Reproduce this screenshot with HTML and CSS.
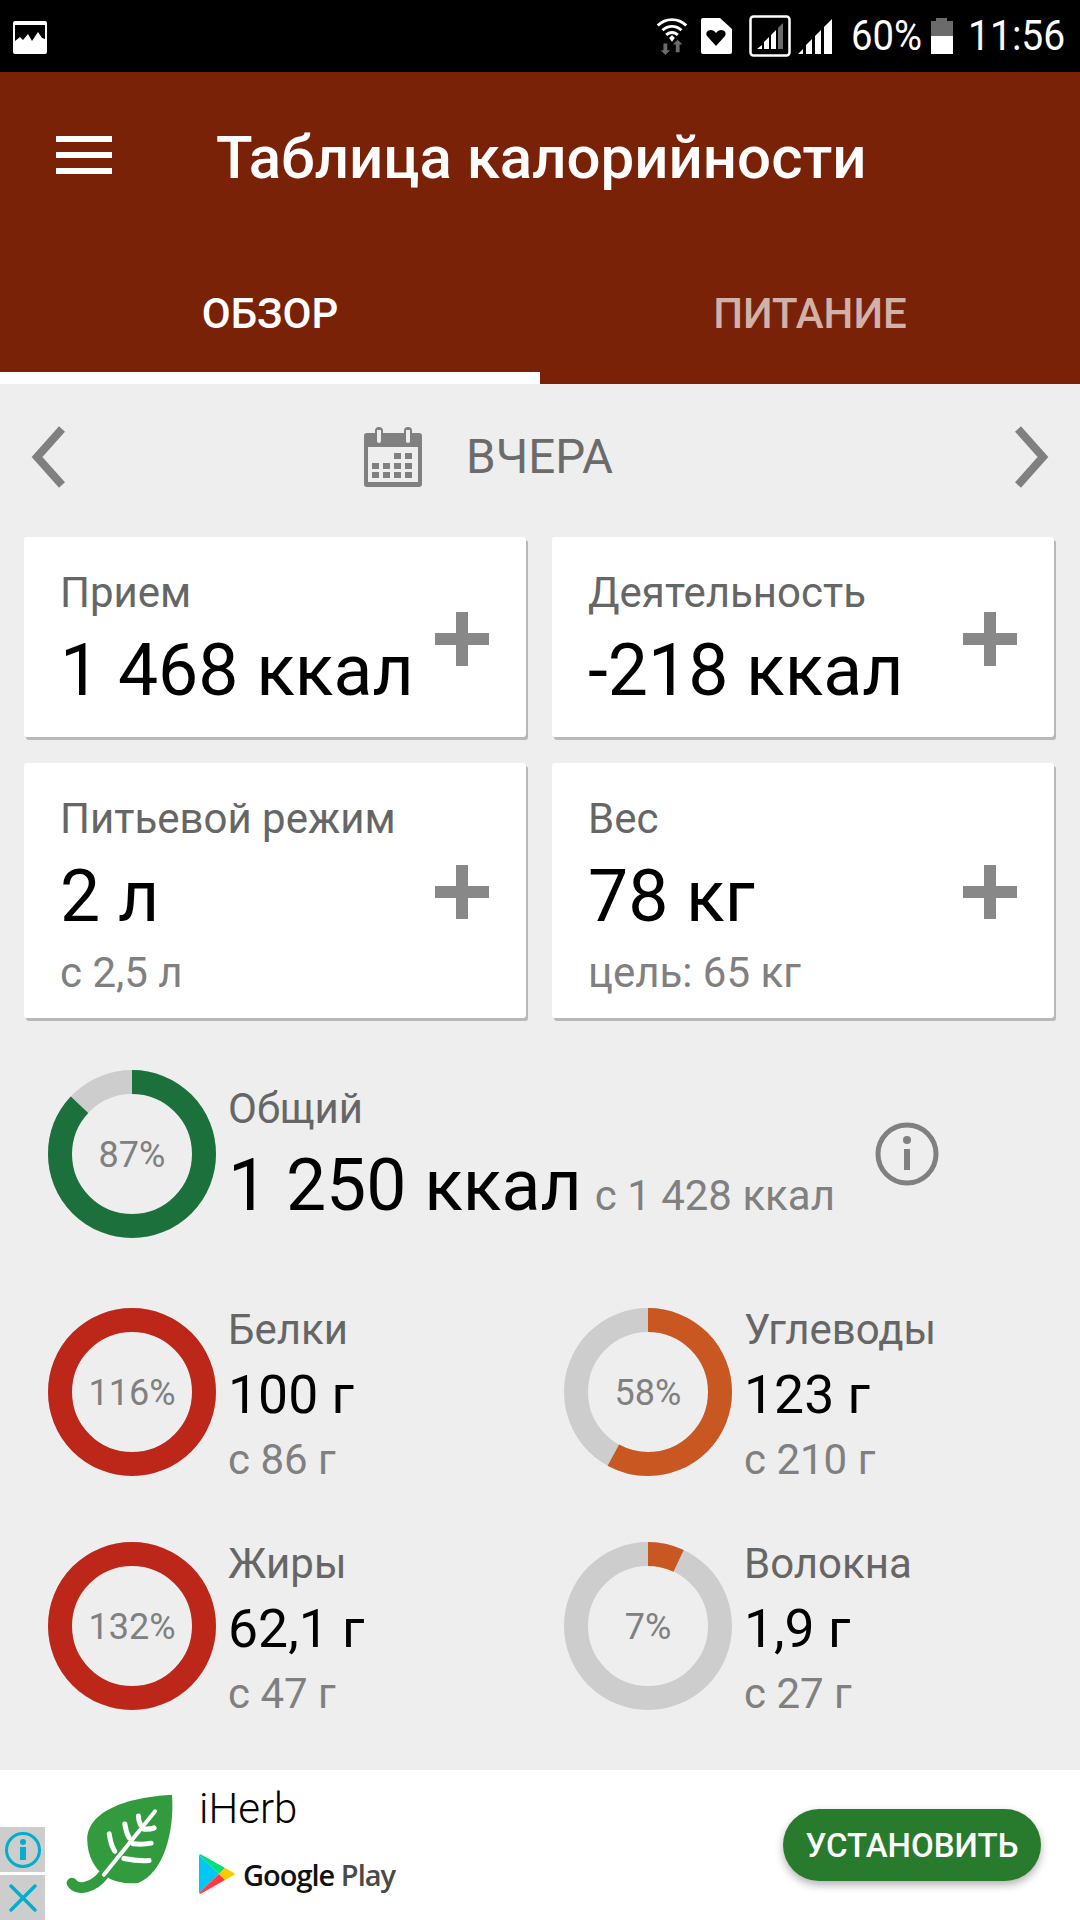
FILE: index.html
```html
<!DOCTYPE html>
<html lang="ru">
<head>
    <meta charset="UTF-8">
    <meta name="viewport" content="width=device-width, initial-scale=1.0">
    <title>Таблица калорийности</title>
    <link rel="stylesheet" href="styles.css">
</head>
<body>
    <div class="status-bar">
        <svg class="status-pic" width="36" height="36" viewBox="0 0 36 36">
            <path fill="#fff" d="M3 2h30a2 2 0 0 1 2 2v29a2 2 0 0 1-2 2H3a2 2 0 0 1-2-2V4a2 2 0 0 1 2-2z"/>
            <path fill="#000" d="M3 6h30v14l-3-1-4-6-6 9-4-7-5 6-3-3-5 4z"/>
        </svg>
        <div class="status-right">
            <svg class="wifi" width="34" height="38" viewBox="0 0 34 40">
                <path fill="none" stroke="#fff" stroke-width="3" d="M2 9a21 21 0 0 1 30 0M7 14a14 14 0 0 1 20 0M11 19a8 8 0 0 1 12 0"/>
                <path fill="#fff" d="M14 22l3-3 3 3-3 4z"/>
                <path fill="#6b6b6b" d="M8 28h4v7h3l-5 5-5-5h3zM23 24l5 5h-3v8h-4v-8h-3z"/>
            </svg>
            <svg class="sim" width="32" height="36" viewBox="0 0 32 36">
                <path fill="#fff" d="M3 0h17l12 11v23a2 2 0 0 1-2 2H3a2 2 0 0 1-2-2V2a2 2 0 0 1 2-2z"/>
                <path fill="#000" d="M16 28l-9-10c-3-5 5-9 9-3 4-6 12-2 9 3z"/>
            </svg>
            <svg class="sim-box" width="42" height="42" viewBox="0 0 42 42">
                <rect x="1.500" y="1.500" width="39" height="39" rx="3" fill="none" stroke="#fff" stroke-width="2.500"/>
                <path fill="#fff" d="M8 34l5-4v4zM15 34v-7l5-5v12zM22 34V20l5-5v19z"/>
                <path fill="#6b6b6b" d="M29 34V13l5-5v26z"/>
            </svg>
            <svg width="36" height="36" viewBox="0 0 36 36">
                <path fill="#fff" d="M0 36l5-5v5zM8 36V27l6-6v15zM17 36V18l6-6v24zM26 36V9l8-8v35z"/>
            </svg>
            <span class="status-text percent">60%</span>
            <svg class="battery" width="24" height="36" viewBox="0 0 24 36">
                <path fill="#6b6b6b" d="M6 0h11v3h6v15H1V3h5z"/>
                <rect x="1" y="18" width="22" height="18" fill="#fff"/>
            </svg>
            <span class="status-text time">11:56</span>
        </div>
    </div>

    <header class="app-bar">
        <div class="toolbar">
            <div class="menu-icon"><span></span><span></span><span></span></div>
            <h1>Таблица калорийности</h1>
        </div>
        <div class="tabs">
            <div class="tab active">ОБЗОР</div>
            <div class="tab">ПИТАНИЕ</div>
        </div>
    </header>

    <main class="content">
        <div class="date-row">
            <svg width="38" height="64" viewBox="0 0 38 64"><path fill="none" stroke="#808080" stroke-width="8" d="M32 4L7 32l25 28"/></svg>
            <div class="date">
                <svg width="60" height="60" viewBox="0 0 60 60">
                    <path fill="#808080" d="M4 6h8V3a4 4 0 0 1 4-3 4 4 0 0 1 4 3v3h21V3a4 4 0 0 1 4-3 4 4 0 0 1 4 3v3h7a3 3 0 0 1 3 3v48a3 3 0 0 1-3 3H4a3 3 0 0 1-3-3V9a3 3 0 0 1 3-3z"/>
                    <path fill="#eee" d="M5 20h50v35H5zM14 3h4v11a2 2 0 0 1-4 0zM43 3h4v11a2 2 0 0 1-4 0z"/>
                    <path fill="#808080" d="M31 26h7v6h-7zM42 26h7v6h-7zM9 36h7v6H9zM20 36h7v6h-7zM31 36h7v6h-7zM42 36h7v6h-7zM9 45h7v6H9zM20 45h7v6h-7zM31 45h7v6h-7zM42 45h7v6h-7z"/>
                </svg>
                <span>ВЧЕРА</span>
            </div>
            <svg width="38" height="64" viewBox="0 0 38 64"><path fill="none" stroke="#808080" stroke-width="8" d="M6 4l25 28L6 60"/></svg>
        </div>

        <div class="cards">
            <div class="card short">
                <div class="card-text">
                    <div class="label">Прием</div>
                    <div class="value">1 468 ккал</div>
                </div>
                <div class="plus"></div>
            </div>
            <div class="card short">
                <div class="card-text">
                    <div class="label">Деятельность</div>
                    <div class="value">-218 ккал</div>
                </div>
                <div class="plus"></div>
            </div>
            <div class="card">
                <div class="card-text">
                    <div class="label">Питьевой режим</div>
                    <div class="value">2 л</div>
                    <div class="sub">с 2,5 л</div>
                </div>
                <div class="plus"></div>
            </div>
            <div class="card">
                <div class="card-text">
                    <div class="label">Вес</div>
                    <div class="value">78 кг</div>
                    <div class="sub">цель: 65 кг</div>
                </div>
                <div class="plus"></div>
            </div>
        </div>

        <div class="total">
            <div class="ring">
                <svg width="168" height="168" viewBox="0 0 168 168">
                    <circle class="track" cx="84" cy="84" r="72"/>
                    <circle class="arc" stroke="#1b703c" stroke-dasharray="87 100" pathLength="100" cx="84" cy="84" r="72"/>
                </svg>
                <span>87%</span>
            </div>
            <div class="total-text">
                <div class="label">Общий</div>
                <div class="total-line"><span class="value">1 250 ккал</span><span class="sub">с 1 428 ккал</span></div>
            </div>
            <svg class="info" width="64" height="64" viewBox="0 0 64 64">
                <circle cx="32" cy="32" r="29" fill="none" stroke="#808080" stroke-width="5"/>
                <rect x="29" y="27" width="6" height="21" fill="#808080"/>
                <circle cx="32" cy="18" r="4" fill="#808080"/>
            </svg>
        </div>

        <div class="nutrients">
            <div class="nutrient">
                <div class="ring">
                    <svg width="168" height="168" viewBox="0 0 168 168">
                        <circle class="track" cx="84" cy="84" r="72"/>
                        <circle class="arc" stroke="#bd2719" stroke-dasharray="100 100" pathLength="100" cx="84" cy="84" r="72"/>
                    </svg>
                    <span>116%</span>
                </div>
                <div class="nutrient-text">
                    <div class="label">Белки</div>
                    <div class="amount">100 г</div>
                    <div class="sub">с 86 г</div>
                </div>
            </div>
            <div class="nutrient">
                <div class="ring">
                    <svg width="168" height="168" viewBox="0 0 168 168">
                        <circle class="track" cx="84" cy="84" r="72"/>
                        <circle class="arc" stroke="#c85722" stroke-dasharray="58 100" pathLength="100" cx="84" cy="84" r="72"/>
                    </svg>
                    <span>58%</span>
                </div>
                <div class="nutrient-text">
                    <div class="label">Углеводы</div>
                    <div class="amount">123 г</div>
                    <div class="sub">с 210 г</div>
                </div>
            </div>
            <div class="nutrient">
                <div class="ring">
                    <svg width="168" height="168" viewBox="0 0 168 168">
                        <circle class="track" cx="84" cy="84" r="72"/>
                        <circle class="arc" stroke="#bd2719" stroke-dasharray="100 100" pathLength="100" cx="84" cy="84" r="72"/>
                    </svg>
                    <span>132%</span>
                </div>
                <div class="nutrient-text">
                    <div class="label">Жиры</div>
                    <div class="amount">62,1 г</div>
                    <div class="sub">с 47 г</div>
                </div>
            </div>
            <div class="nutrient">
                <div class="ring">
                    <svg width="168" height="168" viewBox="0 0 168 168">
                        <circle class="track" cx="84" cy="84" r="72"/>
                        <circle class="arc" stroke="#c85722" stroke-dasharray="7 100" pathLength="100" cx="84" cy="84" r="72"/>
                    </svg>
                    <span>7%</span>
                </div>
                <div class="nutrient-text">
                    <div class="label">Волокна</div>
                    <div class="amount">1,9 г</div>
                    <div class="sub">с 27 г</div>
                </div>
            </div>
        </div>
    </main>

    <footer class="ad">
        <svg class="ad-logo" width="113" height="107" viewBox="195 100 340 320">
            <path fill="#319b3d" d="M517 105C420 108 262 140 262 240c0 50 25 90 50 105 30 25 70 27 103 25C490 340 525 220 517 105z"/>
            <path fill="none" stroke="#319b3d" stroke-width="32" stroke-linecap="round" d="M216 370c15 25 65 15 95-25"/>
            <g fill="none" stroke="#fff" stroke-linecap="round">
                <path stroke-width="12" d="M312 345L466 154"/>
                <path stroke-width="15" d="M328 222c3 20 8 40 17 52M375 192c2 15 5 28 13 42M416 168c0 10 2 18 6 26M372 296c25 5 50 8 76 6M400 252c20 2 35 2 54-2M432 208c10 0 22 0 31-4"/>
            </g>
        </svg>
        <div class="ad-text">
            <div class="ad-name">iHerb</div>
            <div class="store">
                <svg width="36" height="40" viewBox="0 0 36 40">
                    <path fill="#00c8f5" d="M0 1l20 19L0 39z"/>
                    <path fill="#00e07a" d="M0 1c1-1 2-1 3 0l23 13-6 6z"/>
                    <path fill="#ffc900" d="M26 14l9 5c1 .6 1 1.400 0 2l-9 5-6-6z"/>
                    <path fill="#ff3a44" d="M0 39c1 1 2 1 3 0l23-13-6-6z"/>
                </svg>
                <span class="store-name">Google <b>Play</b></span>
            </div>
        </div>
        <div class="install">УСТАНОВИТЬ</div>
        <div class="ad-choices">
            <div class="choice">
                <svg width="38" height="38" viewBox="0 0 38 38">
                    <circle cx="19" cy="19" r="16.500" fill="none" stroke="#00aecd" stroke-width="3"/>
                    <rect x="16" y="16" width="6" height="13" fill="#00aecd"/>
                    <circle cx="19" cy="11" r="3" fill="#00aecd"/>
                </svg>
            </div>
            <div class="choice">
                <svg width="30" height="30" viewBox="0 0 30 30">
                    <path fill="none" stroke="#00aecd" stroke-width="3.500" stroke-linecap="round" d="M3 3l24 24M27 3L3 27"/>
                </svg>
            </div>
        </div>
    </footer>
</body>
</html>
```

FILE: styles.css
```css
* { box-sizing: border-box; }
html, body { margin: 0; padding: 0; }
body {
    width: 1080px;
    height: 1920px;
    overflow: hidden;
    display: flex;
    flex-direction: column;
    font-family: Roboto, "Noto Sans", sans-serif;
    background-color: #eee;
}

/* status bar */
.status-bar {
    height: 72px;
    background-color: #000;
    display: flex;
    align-items: center;
    justify-content: space-between;
    padding: 0 17px 0 12px;
    color: #fff;
}
.status-pic { margin-top: 1px; }
.status-right { display: flex; align-items: center; gap: 7px; }
.sim { margin-left: 4px; }
.sim-box { margin-left: 10px; }
.status-text {
    display: block;
    font-size: 42px;
    line-height: 72px;
    white-space: nowrap;
    transform: scaleX(0.91);
    transform-origin: left center;
}
.percent { width: 69px; margin-left: 10px; }
.battery { margin-left: 3px; }
.time { width: 95px; margin-left: 7px; transform: scaleX(0.93); }

/* app bar */
.app-bar { height: 312px; background-color: #7a2208; display: flex; flex-direction: column; }
.toolbar { height: 168px; display: flex; align-items: center; padding: 0 0 0 56px; }
.menu-icon { width: 56px; display: flex; flex-direction: column; gap: 10px; margin: -2px 104px 0 0; }
.menu-icon span { height: 6px; background-color: #fff; }
h1 { margin: 2px 0 0; font-size: 60px; font-weight: 500; color: #fff; }
.tabs { flex: 1; display: flex; }
.tab {
    width: 540px;
    display: flex;
    align-items: center;
    justify-content: center;
    padding: 14px 0 12px;
    font-size: 42px;
    font-weight: 500;
    color: #d1b1a8;
}
.tab.active { color: #fff; border-bottom: 12px solid #fff; padding-bottom: 0; }

/* date row */
.date-row {
    height: 153px;
    display: flex;
    align-items: center;
    justify-content: space-between;
    padding: 0 30px 8px;
}
.date { display: flex; align-items: center; gap: 43px; font-size: 47.500px; color: #6b6b6b; margin-right: 104px; }

/* cards */
.cards {
    display: grid;
    grid-template-columns: 502px 502px;
    grid-template-rows: 200px 255px;
    gap: 26px;
    padding: 0 26px 0 24px;
}
.card {
    background-color: #fff;
    border-radius: 3px;
    box-shadow: 2px 3px 0 #b8b8b8;
    padding: 33px 36px;
    display: flex;
    justify-content: space-between;
}
.label { font-size: 42px; line-height: 46px; color: #666; }
.value { font-size: 71.500px; line-height: 84px; color: #000; }
.sub { font-size: 42px; line-height: 46px; color: #808080; }
.card .value { margin-top: 13px; }
.card .sub { margin-top: 11px; }
.plus {
    width: 54px;
    height: 54px;
    margin-right: 1px;
    align-self: center;
    background:
        linear-gradient(#888, #888) center / 100% 12px no-repeat,
        linear-gradient(#888, #888) center / 12px 100% no-repeat;
}
.card.short .plus { margin-top: 4px; }
.card:not(.short) .plus { margin-top: 2px; }

/* rings */
.ring { position: relative; width: 168px; height: 168px; flex-shrink: 0; }
.ring svg { display: block; transform: rotate(-90deg); }
.ring span {
    position: absolute;
    inset: 0;
    padding-top: 2px;
    display: flex;
    align-items: center;
    justify-content: center;
    font-size: 36px;
    color: #808080;
}
.track { fill: none; stroke: #cdcdcd; stroke-width: 24; }
.arc { fill: none; stroke-width: 24; }

.total { display: flex; align-items: center; padding: 52px 0 0 48px; }
.total-text { margin: 5px 0 0 12px; width: 647px; }
.total-text .value { margin-top: 12px; }
.total-line { display: flex; align-items: baseline; gap: 13px; white-space: nowrap; }
.info { margin-top: 0; }

.nutrients {
    display: grid;
    grid-template-columns: 516px 500px;
    row-gap: 66px;
    padding: 70px 0 0 48px;
}
.nutrient { display: flex; align-items: center; gap: 12px; }
.nutrient-text { margin: -1px 0 -7px; }
.amount { font-size: 53.500px; line-height: 84px; color: #000; }

/* ad */
.ad {
    margin-top: auto;
    height: 150px;
    background-color: #fff;
    display: flex;
    align-items: center;
    position: relative;
    padding-left: 65px;
}
.ad-logo { margin-top: 3px; }
.ad-text { margin-left: 21px; }
.ad-name { font-size: 42px; font-weight: 300; line-height: 50px; color: #000; margin-top: -12px; }
.store { display: flex; align-items: center; gap: 8px; margin-top: 20px; }
.store-name { font-family: "Open Sans", sans-serif; font-size: 29px; font-weight: 600; letter-spacing: -1px; color: #111; }
.store-name b { font-weight: 600; color: #4a4a4a; }
.install {
    margin-left: auto;
    margin-right: 39px;
    width: 258px;
    height: 72px;
    border-radius: 36px;
    background-color: #287a2d;
    box-shadow: 0 4px 8px rgba(0, 0, 0, 0.3);
    display: flex;
    align-items: center;
    justify-content: center;
    font-size: 33px;
    font-weight: 500;
    color: #fff;
}
.ad-choices { position: absolute; left: 0; bottom: 0; display: flex; flex-direction: column; gap: 3px; }
.choice { width: 45px; height: 45px; background-color: #cdcdcd; display: flex; align-items: center; justify-content: center; }
```
